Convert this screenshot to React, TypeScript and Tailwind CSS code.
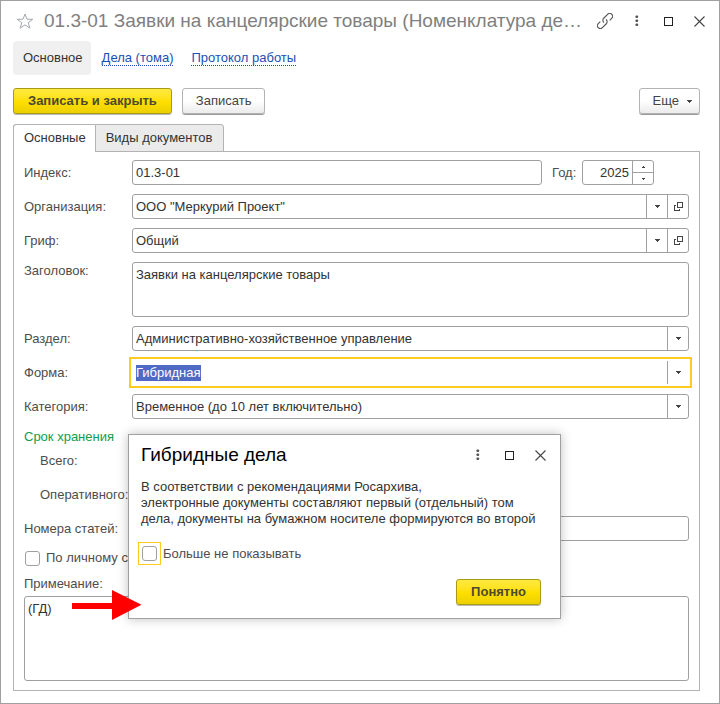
import { useEffect, useRef } from 'react';
import type { ReactNode } from 'react';

function StarIcon() {
  return (
    <svg className="h-4 w-[18px]" viewBox="0 0 18 16" fill="none" stroke="#a3a8ad" strokeWidth="1">
      <path d="M9 1l2 5.2 5.8.1-4.6 3.4 1.7 5.4L9 11.9l-4.9 3.2 1.7-5.4L1.2 6.3 7 6.2z" />
    </svg>
  );
}

function LinkIcon() {
  return (
    <svg className="size-4" viewBox="0 0 16 16" fill="none" stroke="#555" strokeWidth="1.1">
      <g transform="translate(8 8) rotate(-45)">
        <path d="M-1.8.4A2.9 2.9 0 0 1 1-2.9H6.6a2.9 2.9 0 0 1 0 5.8H3.8" />
        <path d="M1.8-.4A2.9 2.9 0 0 1-1 2.9H-6.6a2.9 2.9 0 0 1 0-5.8H-3.8" />
      </g>
    </svg>
  );
}

function MoreIcon() {
  return (
    <svg className="h-3 w-1" viewBox="0 0 4 12" fill="#555">
      <rect x="0.5" y="0.5" width="2.6" height="2.6" rx="0.8" />
      <rect x="0.5" y="4.5" width="2.6" height="2.6" rx="0.8" />
      <rect x="0.5" y="8.5" width="2.6" height="2.6" rx="0.8" />
    </svg>
  );
}

function MaximizeIcon() {
  return (
    <svg className="size-[9px]" viewBox="0 0 9 9" fill="none" stroke="#222" shapeRendering="crispEdges">
      <rect x="0.5" y="0.5" width="8" height="8" />
    </svg>
  );
}

function CloseIcon() {
  return (
    <svg className="size-[11px]" viewBox="0 0 11 11" fill="none" stroke="#444" strokeWidth="1.1">
      <path d="M.5.5l10 10M10.5.5l-10 10" />
    </svg>
  );
}

function CaretIcon() {
  return (
    <svg className="h-[3px] w-[5px]" viewBox="0 0 5 3" fill="#444" shapeRendering="crispEdges">
      <path d="M0 0h5v1H4v1H3v1H2V2H1V1H0z" />
    </svg>
  );
}

function OpenIcon() {
  return (
    <svg className="size-[9px]" viewBox="0 0 9 9" fill="none" stroke="#444" shapeRendering="crispEdges">
      <path d="M3.5.5h5v5h-5zM2 3.5H.5v5h5V7" />
    </svg>
  );
}

function WindowControls() {
  return (
    <div className="flex items-center gap-[11px]">
      <button type="button" aria-label="Еще действия" className="flex size-5 items-center justify-center">
        <MoreIcon />
      </button>
      <button type="button" aria-label="Развернуть" className="flex size-5 items-center justify-center">
        <MaximizeIcon />
      </button>
      <button type="button" aria-label="Закрыть" className="flex size-5 items-center justify-center">
        <CloseIcon />
      </button>
    </div>
  );
}

const boxClass = 'rounded-[3px] border border-[#a0a0a0] bg-white';

interface RowProps {
  id: string;
  label: string;
  children: ReactNode;
}

function Row({ id, label, children }: RowProps) {
  return (
    <div className="flex items-center">
      <label htmlFor={id} className="w-27 shrink-0 text-[#4d4d4d]">
        {label}
      </label>
      {children}
    </div>
  );
}

interface PickerProps {
  id: string;
  value: string;
  /** Adds the button that opens the chosen item */
  withOpen?: boolean;
}

function Picker({ id, value, withOpen }: PickerProps) {
  return (
    <div className={`flex h-[25px] min-w-0 flex-1 ${boxClass}`}>
      <div className="relative min-w-0 flex-1">
        <select id={id} defaultValue={value} className="h-full w-full appearance-none pr-6 pl-[3px] outline-none">
          <option>{value}</option>
        </select>
        <span className="pointer-events-none absolute inset-y-0 right-0 flex w-[21px] items-center justify-center border-l border-[#a0a0a0]">
          <CaretIcon />
        </span>
      </div>
      {withOpen && (
        <button
          type="button"
          aria-label="Открыть"
          className="flex w-[21px] items-center justify-center border-l border-[#a0a0a0]"
        >
          <OpenIcon />
        </button>
      )}
    </div>
  );
}

function PrimaryButton({ children }: { children: ReactNode }) {
  return (
    <button
      type="button"
      className="h-[26px] rounded-[3px] border border-[#a89a14] bg-linear-to-b from-[#ffe93d] via-[#ffe000] to-[#ecd000] px-[14px] font-bold text-[#4d4a33] shadow-[0_1px_0_#bbb]"
    >
      {children}
    </button>
  );
}

const plainButton =
  'h-[26px] rounded-[3px] border border-[#b3b3b3] bg-linear-to-b from-white from-50% to-[#ebebeb] text-[#444] shadow-[0_1px_0_#999]';

function HintDialog() {
  return (
    <div
      role="dialog"
      aria-labelledby="hint-title"
      className="absolute top-[433px] left-[127px] w-[433px] border border-[#a0a0a0] bg-white pr-[10px] pb-[13px] pl-3 shadow-[0_0_10px_rgba(0,0,0,0.25)]"
    >
      <div className="flex h-10 items-center justify-between">
        <h2 id="hint-title" className="text-[19px] text-black">
          Гибридные дела
        </h2>
        <WindowControls />
      </div>
      <p className="mt-1 leading-4 text-[#333]">
        В соответствии с рекомендациями Росархива,
        <br />
        электронные документы составляют первый (отдельный) том
        <br />
        дела, документы на бумажном носителе формируются во второй
      </p>
      <div className="mt-[15px] -ml-[3px] flex items-center">
        <span className="flex size-[23px] items-center justify-center border border-[#ffcb1f]">
          <input id="hide" type="checkbox" className={`size-[15px] appearance-none ${boxClass}`} />
        </span>
        <label htmlFor="hide" className="ml-[2px] text-[#4d4d4d]">
          Больше не показывать
        </label>
      </div>
      <div className="mt-[14px] mr-[9px] flex justify-end">
        <PrimaryButton>Понятно</PrimaryButton>
      </div>
    </div>
  );
}

export default function App() {
  const formRef = useRef<HTMLInputElement>(null);

  useEffect(() => {
    formRef.current?.focus();
    formRef.current?.select();
  }, []);

  return (
    <main className="relative flex min-h-screen flex-col border border-[#a0a0a0] bg-white pb-3 font-['Liberation_Sans',Arial,sans-serif] text-[13px] leading-4 text-[#333]">
      <header className="flex h-10 items-center pr-[10px] pl-[15px]">
        <button type="button" aria-label="В избранное">
          <StarIcon />
        </button>
        <h1 className="ml-[10px] min-w-0 flex-1 truncate text-[19px] leading-6 text-[#808080]">
          01.3-01 Заявки на канцелярские товары (Номенклатура де…
        </h1>
        <button type="button" aria-label="Ссылка" className="mr-[14px] ml-3">
          <LinkIcon />
        </button>
        <WindowControls />
      </header>

      <nav className="flex items-center px-3">
        <span className="rounded bg-[#f0f0f0] py-[9px] pr-2 pl-[10px]">Основное</span>
        <a href="#volumes" className="ml-[11px] border-b border-dotted border-[#1a4fb5] leading-[14px] text-[#1a4fb5]">
          Дела (тома)
        </a>
        <a href="#log" className="ml-[18px] border-b border-dotted border-[#1a4fb5] leading-[14px] text-[#1a4fb5]">
          Протокол работы
        </a>
      </nav>

      <div className="mt-[13px] flex items-center gap-[10px] pr-[19px] pl-3">
        <PrimaryButton>Записать и закрыть</PrimaryButton>
        <button type="button" className={`px-[13px] ${plainButton}`}>
          Записать
        </button>
        <button type="button" className={`ml-auto flex items-center gap-2 pr-[7px] pl-[13px] ${plainButton}`}>
          Еще
          <CaretIcon />
        </button>
      </div>

      <div role="tablist" className="relative z-10 mt-[10px] -mb-px flex px-3">
        <button
          type="button"
          role="tab"
          aria-selected="true"
          className="h-7 rounded-tl-[3px] border border-r-0 border-b-0 border-[#b3b3b3] bg-white pr-[9px] pb-px pl-[10px]"
        >
          Основные
        </button>
        <button
          type="button"
          role="tab"
          aria-selected="false"
          className="h-7 rounded-tr-[3px] border border-[#b3b3b3] bg-[#ebebeb] pr-[11px] pl-[10px]"
        >
          Виды документов
        </button>
      </div>

      <form className="mr-[19px] ml-3 flex flex-1 flex-col border border-[#b3b3b3] px-[10px] pt-2 pb-[9px]">
        <div className="flex flex-col gap-[9px]">
          <Row id="index" label="Индекс:">
            <input id="index" defaultValue="01.3-01" className={`h-[25px] min-w-0 flex-1 px-[3px] ${boxClass}`} />
            <label htmlFor="year" className="ml-[10px] w-[30px] text-[#4d4d4d]">
              Год:
            </label>
            <div className={`mr-[35px] flex h-[25px] w-[72px] ${boxClass}`}>
              <input id="year" defaultValue="2025" className="min-w-0 flex-1 pr-[3px] text-right outline-none" />
              <div className="flex w-[21px] flex-col border-l border-[#a0a0a0]">
                <button
                  type="button"
                  aria-label="Увеличить"
                  className="flex flex-1 items-center justify-center border-b border-[#a0a0a0]"
                >
                  <svg className="h-[2px] w-[3px]" viewBox="0 0 3 2" fill="#444" shapeRendering="crispEdges">
                    <path d="M1 0h1v1h1v1H0V1h1z" />
                  </svg>
                </button>
                <button type="button" aria-label="Уменьшить" className="flex flex-1 items-center justify-center">
                  <svg className="h-[2px] w-[3px]" viewBox="0 0 3 2" fill="#444" shapeRendering="crispEdges">
                    <path d="M0 0h3v1H2v1H1V1H0z" />
                  </svg>
                </button>
              </div>
            </div>
          </Row>
          <Row id="org" label="Организация:">
            <Picker id="org" value={'ООО "Меркурий Проект"'} withOpen />
          </Row>
          <Row id="stamp" label="Гриф:">
            <Picker id="stamp" value="Общий" withOpen />
          </Row>
          <div className="flex items-start">
            <label htmlFor="title" className="w-27 shrink-0 pt-px text-[#4d4d4d]">
              Заголовок:
            </label>
            <textarea
              id="title"
              defaultValue="Заявки на канцелярские товары"
              className={`h-[55px] min-w-0 flex-1 resize-none px-[3px] py-1 ${boxClass}`}
            />
          </div>
          <Row id="section" label="Раздел:">
            <Picker id="section" value="Административно-хозяйственное управление" />
          </Row>
          <Row id="kind" label="Форма:">
            <div className="flex h-[25px] min-w-0 flex-1 border border-transparent outline-2 outline-offset-1 outline-[#ffcb1f]">
              <input
                id="kind"
                ref={formRef}
                defaultValue="Гибридная"
                className="min-w-0 flex-1 px-[3px] outline-none selection:bg-[#4f6ac4] selection:text-white"
              />
              <button
                type="button"
                aria-label="Выбрать форму"
                className="flex w-[21px] items-center justify-center border-l border-[#a0a0a0]"
              >
                <CaretIcon />
              </button>
            </div>
          </Row>
          <Row id="category" label="Категория:">
            <Picker id="category" value="Временное (до 10 лет включительно)" />
          </Row>
        </div>

        <fieldset className="mt-[10px]">
          <legend className="text-[#0f9d4f]">Срок хранения</legend>
          <div className="flex flex-col gap-[9px] pt-[3px] pl-4">
            <div className="flex items-center">
              <label htmlFor="total" className="w-23 shrink-0 text-[#4d4d4d]">
                Всего:
              </label>
              <input id="total" className={`h-[25px] w-20 px-[3px] ${boxClass}`} />
            </div>
            <div className="flex items-center">
              <label htmlFor="operative" className="w-23 shrink-0 text-[#4d4d4d]">
                Оперативного:
              </label>
              <input id="operative" className={`h-[25px] w-20 px-[3px] ${boxClass}`} />
            </div>
          </div>
        </fieldset>

        <div className="mt-[9px]">
          <Row id="articles" label="Номера статей:">
            <input id="articles" className={`h-[25px] min-w-0 flex-1 px-[3px] ${boxClass}`} />
          </Row>
        </div>
        <div className="mt-[9px] flex items-center">
          <input id="personnel" type="checkbox" className={`ml-px size-[15px] appearance-none ${boxClass}`} />
          <label htmlFor="personnel" className="ml-[6px] text-[#4d4d4d]">
            По личному составу
          </label>
        </div>
        <label htmlFor="note" className="mt-[10px] text-[#4d4d4d]">
          Примечание:
        </label>
        <textarea
          id="note"
          defaultValue="(ГД)"
          className={`mt-1 min-h-[85px] flex-1 resize-none px-[3px] py-1 ${boxClass}`}
        />
      </form>

      <HintDialog />

      {/* Red pointer towards the hint */}
      <svg className="pointer-events-none absolute top-[589px] left-[70px] h-[30px] w-[71px]" viewBox="0 0 71 30" fill="#f00">
        <path d="M1 13h40V0l29.5 14.7L41 30V19H1z" />
      </svg>
    </main>
  );
}
